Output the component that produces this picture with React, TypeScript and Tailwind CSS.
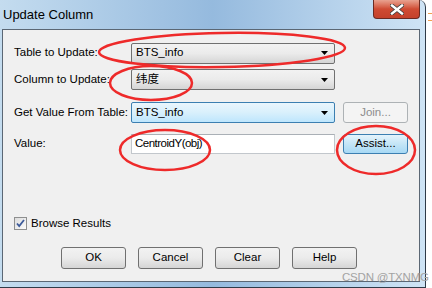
const font = { fontFamily: '"Liberation Sans", "Noto Sans CJK SC", sans-serif' };

function Combo({ value, focused }: { value: string; focused?: boolean }) {
  return (
    <div
      className={`w-[204px] shrink-0 h-[21px] flex items-center justify-between pl-[4px] pr-[6px] rounded-[2px] border ${
        focused
          ? 'border-[#3c7fb1] bg-gradient-to-b from-[#eaf6fd] via-[#d9f0fc] to-[#bee6fd]'
          : 'border-[#707070] bg-gradient-to-b from-[#f2f2f2] via-[#ebebeb] to-[#d5d5d5]'
      }`}
    >
      <span className="text-[11.5px] text-black">{value}</span>
      <svg width="7" height="4" viewBox="0 0 7 4">
        <path d="M0 0h7L3.5 4z" fill="#000" />
      </svg>
    </div>
  );
}

function Btn({ label, kind }: { label: string; kind?: 'default' | 'disabled' }) {
  const cls =
    kind === 'default'
      ? 'border-[#3c7fb1] bg-gradient-to-b from-[#e5f4fc] via-[#c4e5f6] to-[#a7d9f5] text-black'
      : kind === 'disabled'
      ? 'border-[#adb2b5] bg-[#f4f4f4] text-[#8d8d8d]'
      : 'border-[#707070] bg-gradient-to-b from-[#f2f2f2] via-[#ebebeb] to-[#d5d5d5] text-black';
  return (
    <div className={`h-full w-full flex items-center justify-center rounded-[3px] border text-[11.5px] ${cls}`}>
      {label}
    </div>
  );
}

function Label({ children }: { children: React.ReactNode }) {
  return <span className="w-[117px] shrink-0 whitespace-nowrap text-[11.5px]">{children}</span>;
}

export default function App() {
  return (
    <div className="relative w-[432px] h-[288px] bg-white overflow-hidden flex" style={font}>
      {/* Window */}
      <div className="w-[426px] h-[288px] shrink-0 flex flex-col rounded-tr-[7px] border-r border-b border-[#2f3b48] bg-gradient-to-r from-[#c4dcef] via-[#95bade] to-[#cfe4f5]">
        {/* Title bar */}
        <div className="h-[29px] flex items-start justify-between pl-[3px]">
          <span className="mt-[7px] text-[13px] text-black leading-[16px]">Update Column</span>
          <div className="w-[47px] h-[19px] mr-[5px] rounded-b-[4px] border border-t-0 border-[#6b2a22] bg-gradient-to-b from-[#e8a290] via-[#cf4b33] to-[#c4412b] flex items-center justify-center">
            <svg width="14" height="11" viewBox="0 0 14 11">
              <path d="M2 1.5l10 8M12 1.5l-10 8" stroke="#3d3d3d" strokeWidth="4" strokeLinecap="square" />
              <path d="M2 1.5l10 8M12 1.5l-10 8" stroke="#ffffff" strokeWidth="2.4" strokeLinecap="square" />
            </svg>
          </div>
        </div>

        {/* Client area */}
        <div className="ml-[2px] mr-[5px] h-[253px] border border-[#5b6774] bg-[#f0f0f0] flex flex-col pl-[11px] pt-[12px]">
          <div className="flex items-center h-[22px]">
            <Label>Table to Update:</Label>
            <Combo value="BTS_info" />
          </div>
          <div className="flex items-center h-[21px] mt-[5px]">
            <Label>Column to Update:</Label>
            <Combo value="纬度" />
          </div>
          <div className="flex items-center h-[21px] mt-[12px]">
            <Label>Get Value From Table:</Label>
            <Combo value="BTS_info" focused />
            <div className="ml-[8px] w-[65px] h-[21px] shrink-0">
              <Btn label="Join..." kind="disabled" />
            </div>
          </div>
          <div className="flex items-center h-[20px] mt-[11px]">
            <Label>Value:</Label>
            <div className="w-[204px] shrink-0 h-[20px] border border-[#c2c7cc] border-t-[#aab0b6] bg-white flex items-center pl-[3px] text-[11.5px] tracking-[-0.5px]">
              CentroidY(obj)
            </div>
            <div className="ml-[8px] w-[65px] h-[20px] shrink-0">
              <Btn label="Assist..." kind="default" />
            </div>
          </div>

          <div className="flex items-center mt-[63px] h-[13px]">
            <div className="w-[13px] h-[13px] border border-[#8e8f8f] bg-gradient-to-br from-[#dcdcdc] to-[#fbfbfb] flex items-center justify-center">
              <svg width="9" height="9" viewBox="0 0 9 9">
                <path d="M1 4.5l2.2 2.5L8 1" fill="none" stroke="#3c5a9a" strokeWidth="1.8" />
              </svg>
            </div>
            <span className="ml-[4px] text-[11.5px]">Browse Results</span>
          </div>

          <div className="flex mt-[17px] ml-[47px] gap-[12px] h-[22px]">
            <div className="w-[65px]"><Btn label="OK" /></div>
            <div className="w-[65px]"><Btn label="Cancel" /></div>
            <div className="w-[65px]"><Btn label="Clear" /></div>
            <div className="w-[65px]"><Btn label="Help" /></div>
          </div>
        </div>
      </div>

      {/* background marks right of window */}
      <div className="flex-1 flex flex-col">
        <div className="mt-[13px] ml-[2px] h-[1px] w-[4px] bg-[#f0a050]" />
        <div className="mt-[6px] ml-[2px] h-[1px] w-[4px] bg-[#f0a050]" />
      </div>

      {/* Watermark */}
      <span className="absolute left-[342px] top-[269px] text-[11.5px] text-[#a3a3a3] tracking-[-0.2px]">
        CSDN @TXNMG
      </span>

      {/* Red annotation ellipses */}
      <svg className="absolute inset-0 pointer-events-none" width="432" height="288">
        <g fill="none" stroke="#ee2a2a" strokeWidth="2.5">
          <ellipse cx="222" cy="50" rx="123" ry="17" transform="rotate(-1 222 50)" />
          <ellipse cx="151" cy="83" rx="41" ry="17" />
          <ellipse cx="165" cy="150" rx="45" ry="20" />
          <ellipse cx="376" cy="150" rx="39" ry="24" />
        </g>
      </svg>
    </div>
  );
}
